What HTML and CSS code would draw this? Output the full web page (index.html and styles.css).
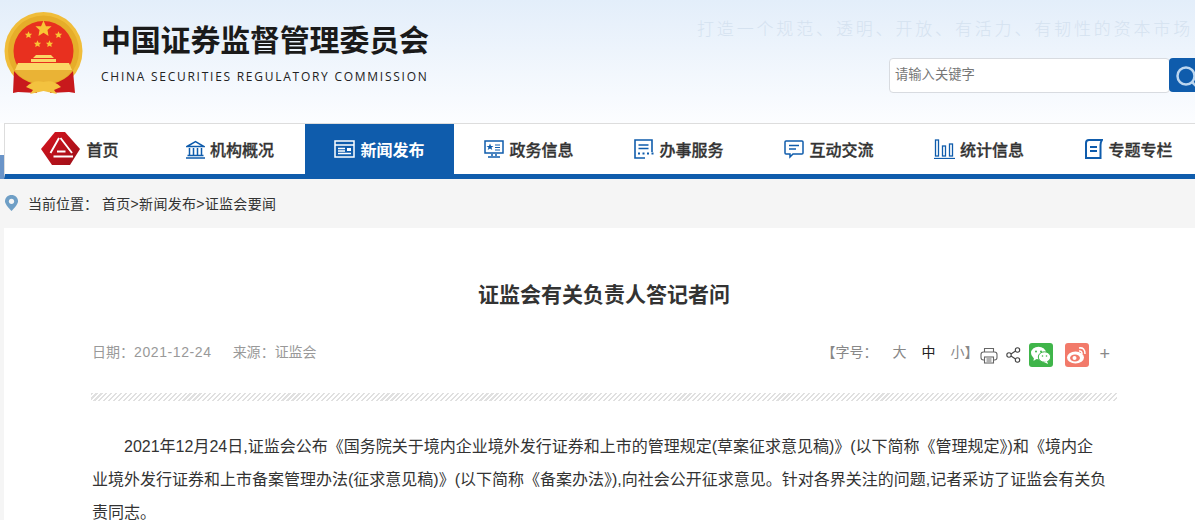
FILE: index.html
```html
<!DOCTYPE html>
<html lang="zh-CN">
<head>
  <meta charset="UTF-8" />
  <title>证监会有关负责人答记者问</title>
  <meta name="viewport" content="width=device-width, initial-scale=1" />
  <link rel="stylesheet" href="styles.css">
</head>
<body>
  <header class="header">
    <div class="brand">
      <svg class="seal" width="80" height="84" viewBox="0 0 80 84">
        <defs>
          <path id="star" d="M0 -10 L2.900 -3.100 L9.500 -3.100 L4.700 1.200 L5.900 8.100 L0 4.500 L-5.900 8.100 L-4.700 1.200 L-9.500 -3.100 L-2.900 -3.100 Z" fill="#f9c535"/>
        </defs>
        <circle cx="39.500" cy="40" r="39" fill="#f0bd3a"/>
        <circle cx="39.500" cy="40" r="35.500" fill="#e6ad2a"/>
        <circle cx="39.500" cy="40" r="30" fill="#e8301f"/>
        <use href="#star" transform="translate(39.500 18) scale(.85)"/>
        <use href="#star" transform="translate(24.500 24) scale(.38)"/>
        <use href="#star" transform="translate(54.500 24) scale(.38)"/>
        <use href="#star" transform="translate(33.500 33) scale(.38)"/>
        <use href="#star" transform="translate(45.500 33) scale(.38)"/>
        <path d="M29 47 L32 44 L47 44 L50 47 Z M27 48 H52 V51 H27 Z" fill="#fbd766"/>
        <path d="M14 52 H65 L68 59 H11 Z" fill="#fbd766"/>
        <path d="M11 59 H68 Q60 72 39.500 72 Q19 72 11 59 Z" fill="#eab335"/>
        <path d="M10 60 Q18 70 31 73 L33 82 L14 81 L9 82 Z" fill="#c8191c"/>
        <path d="M69 60 Q61 70 48 73 L46 82 L65 81 L71 82 Z" fill="#c8191c"/>
        <path d="M22 76 Q30 68 39.500 71 Q49 68 57 76 L50 79 L53 83 L39.500 80 L26 83 L29 79 Z" fill="#f3c23f"/>
      </svg>
      <div class="brand-text">
        <div class="brand-cn">中国证券监督管理委员会</div>
        <div class="brand-en">CHINA SECURITIES REGULATORY COMMISSION</div>
      </div>
    </div>
    <div class="header-right">
      <div class="slogan">打造一个规范、透明、开放、有活力、有韧性的资本市场</div>
      <div class="search">
        <div class="search-input">请输入关键字</div>
        <div class="search-btn">
          <svg width="26" height="34" viewBox="0 0 26 34"><circle cx="17" cy="18" r="8.500" fill="none" stroke="#bcd6ef" stroke-width="2.500"/><path d="M23 24 L27 28" stroke="#bcd6ef" stroke-width="2.500"/></svg>
        </div>
      </div>
    </div>
  </header>

  <div class="nav-wrap">
    <nav class="nav">
      <a class="nav-item">
        <svg class="home-logo" width="39" height="34" viewBox="0 0 39 34">
          <defs>
            <linearGradient id="logoRed" x1="0" y1="0" x2="1" y2="1">
              <stop offset="0" stop-color="#d8141f"/>
              <stop offset="1" stop-color="#9c0f18"/>
            </linearGradient>
          </defs>
          <path d="M14 0 H24 L39 17 L29 33 H11 L0 17 Z" fill="url(#logoRed)"/>
          <path d="M18 6 L9.500 21 M19.500 6 L31 21 M12.500 24.500 H32 M16 19.500 H24.500" fill="none" stroke="#fff" stroke-width="1.900"/>
        </svg>
        首页
      </a>
      <a class="nav-item">
        <svg width="19" height="19" viewBox="0 0 19 19" fill="none" stroke="#0f5cac" stroke-width="1.500">
          <path d="M1 6.500 L9.500 1.500 L18 6.500 Z"/><path d="M3.500 8 V15 M7.500 8 V15 M11.500 8 V15 M15.500 8 V15 M1.500 15.500 H17.500 M0 18 H19"/>
        </svg>
        机构概况
      </a>
      <a class="nav-item active">
        <svg width="21" height="18" viewBox="0 0 21 18" fill="none" stroke="#fff" stroke-width="1.500">
          <rect x="1" y="1" width="19" height="16"/><path d="M1 5 H20 M4 8.500 H11 M4 11 H11 M4 13.500 H17" /><rect x="13" y="8" width="4" height="3" fill="#fff" stroke="none"/>
        </svg>
        新闻发布
      </a>
      <a class="nav-item">
        <svg width="20" height="18" viewBox="0 0 20 18" fill="none" stroke="#0f5cac" stroke-width="1.500">
          <rect x="1" y="1" width="18" height="12"/><path d="M11 5 H16 M11 7.500 H16 M11 10 H16" stroke-width="1"/><path d="M6 3.500 L7 6 L9.500 6 L7.500 7.500 L8.300 10 L6 8.500 L3.700 10 L4.500 7.500 L2.500 6 L5 6 Z" fill="#0f5cac" stroke="none"/><path d="M8 14 V16 M12 14 V16 M4 17 H16"/>
        </svg>
        政务信息
      </a>
      <a class="nav-item">
        <svg width="20" height="20" viewBox="0 0 20 20" fill="none" stroke="#0f5cac" stroke-width="1.600">
          <path d="M18 13 V1 H1 V19 H11"/><path d="M4.500 6 H14.500 M4.500 9.500 H14.500"/><path d="M4 14.500 H6 M8.500 14.500 H10.500 M13 14.500 H15 M17.500 14.500 H19.500" stroke-width="2"/>
        </svg>
        办事服务
      </a>
      <a class="nav-item">
        <svg width="20" height="19" viewBox="0 0 20 19" fill="none" stroke="#0f5cac" stroke-width="1.500">
          <path d="M2 1 H18 Q19 1 19 2 V13 Q19 14 18 14 H9 L6 17 V14 H2 Q1 14 1 13 V2 Q1 1 2 1 Z"/><path d="M5 5.500 H15 M5 9 H12"/>
        </svg>
        互动交流
      </a>
      <a class="nav-item">
        <svg width="21" height="20" viewBox="0 0 21 20" fill="none" stroke="#0f5cac" stroke-width="1.300">
          <rect x="1.500" y="1" width="3" height="16"/><rect x="8.500" y="7" width="3" height="10"/><rect x="15.500" y="5" width="3" height="12"/><path d="M0 19.500 H21"/>
        </svg>
        统计信息
      </a>
      <a class="nav-item">
        <svg width="18" height="20" viewBox="0 0 18 20" fill="none" stroke="#0f5cac" stroke-width="2">
          <path d="M4 1 H17 Q15.500 3 15.500 6 V19 H1 V4 Q1 1 4 1 Z"/><path d="M5 8 H12 M5 12 H12"/>
        </svg>
        专题专栏
      </a>
    </nav>
  </div>

  <div class="crumbs">
    <svg width="13" height="16" viewBox="0 0 13 16"><path d="M6.500 0 C10.200 0 13 2.700 13 6.300 C13 10 6.500 16 6.500 16 C6.500 16 0 10 0 6.300 C0 2.700 2.800 0 6.500 0 Z" fill="#6f9fc6"/><circle cx="6.500" cy="6.300" r="2.600" fill="#f5f5f5"/></svg>
    <span class="crumbs-label">当前位置<span class="colon">：</span></span>
    <span class="crumbs-path">首页&gt;新闻发布&gt;证监会要闻</span>
  </div>

  <main class="article">
    <h1 class="article-title">证监会有关负责人答记者问</h1>
    <div class="meta">
      <div class="meta-left">
        <span>日期<span class="colon">：</span><span class="date">2021-12-24</span></span>
        <span>来源<span class="colon">：</span>证监会</span>
      </div>
      <div class="tools">
        <span class="font-size">【字号<span class="colon">：</span></span>
        <span class="size-btn">大</span>
        <span class="size-btn current">中</span>
        <span class="size-btn">小】</span>
        <svg class="tool-print" width="18" height="17" viewBox="0 0 18 17" fill="none" stroke="#666" stroke-width="1.100">
          <path d="M4.500 5 V1.500 H13.500 V5"/><rect x="1" y="5" width="16" height="8" rx="2.500"/><rect x="4.500" y="10" width="9" height="6" fill="#fff"/><path d="M6.500 12 H11.500 M6.500 14 H11.500"/>
        </svg>
        <svg class="tool-share" width="15" height="16" viewBox="0 0 15 16" fill="none" stroke="#444" stroke-width="1.100">
          <circle cx="11.500" cy="3" r="2.200"/><circle cx="3" cy="8" r="2.200"/><circle cx="11.500" cy="13" r="2.200"/><path d="M5 7 L9.500 4 M5 9 L9.500 12"/>
        </svg>
        <span class="share-box wechat">
          <svg width="20" height="18" viewBox="0 0 20 18"><ellipse cx="7.500" cy="7" rx="7.500" ry="6.300" fill="#fff"/><path d="M3 11 L2.500 15 L7 12 Z" fill="#fff"/><ellipse cx="13.500" cy="11" rx="6.200" ry="5.200" fill="#fff" stroke="#3fb54a"/><path d="M16 15 L17 18 L13 16 Z" fill="#fff"/><circle cx="5" cy="5.500" r="1" fill="#3fb54a"/><circle cx="10" cy="5.500" r="1" fill="#3fb54a"/><circle cx="11.500" cy="10" r=".8" fill="#3fb54a"/><circle cx="15.500" cy="10" r=".8" fill="#3fb54a"/></svg>
        </span>
        <span class="share-box weibo">
          <svg width="20" height="18" viewBox="0 0 20 18"><ellipse cx="8.500" cy="11.500" rx="8.500" ry="6" fill="#fff"/><ellipse cx="8" cy="12" rx="5" ry="3.500" fill="#f27a6a"/><circle cx="7.500" cy="12" r="2" fill="#fff"/><path d="M12 2 Q18 1 18 8" fill="none" stroke="#fff" stroke-width="1.500"/><path d="M12 5 Q15 4.500 15 8" fill="none" stroke="#fff" stroke-width="1.500"/></svg>
        </span>
        <span class="tool-plus">+</span>
      </div>
    </div>
    <div class="hatch"></div>
    <div class="article-body">
      <p>2021年12月24日,证监会公布《国务院关于境内企业境外发行证券和上市的管理规定(草案征求意见稿)》(以下简称《管理规定》)和《境内企业境外发行证券和上市备案管理办法(征求意见稿)》(以下简称《备案办法》),向社会公开征求意见。针对各界关注的问题,记者采访了证监会有关负责同志。</p>
    </div>
  </main>
</body>
</html>
```

FILE: styles.css
```css
* {
  box-sizing: border-box;
}
html, body {
  height: 100%;
  overflow: hidden;
}
body {
  margin: 0;
  font-family: "Liberation Sans", "Noto Sans CJK SC", sans-serif;
  color: #333;
  background-color: #f5f5f5;
}
/* TC glyph has the colon centred, like the original */
.colon {
  font-family: "Noto Sans CJK TC", sans-serif;
}

.header {
  display: flex;
  justify-content: space-between;
  height: 123px;
  background: linear-gradient(#e3eefa, #fcfdff);
}
.brand {
  display: flex;
  padding: 11px 0 0 4px;
}
.seal {
  flex: none;
}
.brand-text {
  margin-left: 17px;
}
.brand-cn {
  margin-top: 10px;
  font-size: 30px;
  line-height: 40px;
  font-weight: bold;
  letter-spacing: -0.2px;
  color: #1a1a1a;
  white-space: nowrap;
}
.brand-en {
  margin-top: 6px;
  font-family: "Open Sans", sans-serif;
  font-size: 12px;
  line-height: 20px;
  letter-spacing: 1.74px;
  color: #222;
  white-space: nowrap;
}
.header-right {
  width: 498px;
  overflow: hidden;
}
.slogan {
  margin-top: 15px;
  height: 26px;
  font-family: "Noto Sans CJK SC", sans-serif;
  font-weight: 300;
  font-size: 17px;
  line-height: 26px;
  letter-spacing: 2.84px;
  color: #d5e2f0;
  white-space: nowrap;
}
.search {
  display: flex;
  margin: 17px 0 0 192px;
  height: 35px;
}
.search-input {
  flex: 0 0 281px;
  padding-left: 5px;
  font-size: 13.3px;
  line-height: 32px;
  color: #777;
  background-color: #fff;
  border: 1px solid #d8dbe0;
  border-radius: 4px;
}
.search-btn {
  flex: none;
  width: 30px;
  height: 34px;
  margin-left: -1px;
  background-color: #0f5cac;
  border-radius: 4px 0 0 4px;
}
.search-btn svg {
  display: block;
}

.nav-wrap {
  height: 56px;
  padding-left: 4px;
  background: linear-gradient(#fff 32px, #6a94c8 32px);
}
.nav {
  display: flex;
  height: 56px;
  background-color: #fff;
  border-top: 1px solid #ddd;
  border-left: 1px solid #ddd;
  border-bottom: 5px solid #0f5cac;
}
.nav-item {
  display: flex;
  flex: 0 0 150px;
  align-items: center;
  justify-content: center;
  gap: 5px;
  font-size: 16px;
  font-weight: 500;
  -webkit-text-stroke: 0.3px #333;
  color: #333;
  white-space: nowrap;
}
.nav-item.active {
  flex-basis: 149px;
  color: #fff;
  font-weight: bold;
  -webkit-text-stroke: 0;
  background-color: #0f5cac;
}
.home-logo {
  margin-right: 1px;
}

.crumbs {
  display: flex;
  align-items: center;
  height: 47px;
  padding-left: 5px;
  font-size: 14px;
  color: #333;
}
.crumbs-label {
  margin: 0 4px 0 10px;
}
.crumbs-path {
  letter-spacing: 0.3px;
}

.article {
  margin: 2px 0 0 4px;
  padding: 0 78px 0 87px;
  height: 292px;
  background-color: #fff;
}
.article-title {
  margin: 0;
  padding-top: 52px;
  font-size: 21px;
  line-height: 30px;
  font-weight: bold;
  text-align: center;
  color: #333;
}
.meta {
  display: flex;
  justify-content: space-between;
  align-items: center;
  margin-top: 29px;
  height: 24px;
  font-size: 14px;
  color: #999;
}
.meta-left {
  display: flex;
  gap: 21px;
  padding-left: 1px;
}
.date {
  letter-spacing: 0.6px;
}
.tools {
  display: flex;
  align-items: center;
  height: 24px;
  padding-right: 7px;
  color: #888;
  font-size: 14px;
}
.size-btn {
  margin-left: 15px;
}
.size-btn.current {
  color: #222;
}
.tool-print {
  margin: 8px 0 0 2px;
}
.tool-share {
  margin: 8px 0 0 8px;
}
.share-box {
  display: flex;
  flex: none;
  align-items: center;
  justify-content: center;
  width: 24px;
  height: 24px;
  margin-top: 8px;
  border-radius: 3px;
}
.wechat {
  margin-left: 8px;
  background-color: #3fb54a;
}
.weibo {
  margin-left: 12px;
  background-color: #f27a6a;
}
.tool-plus {
  margin: 6px 0 0 10px;
  font-size: 18px;
  color: #888;
}
.hatch {
  height: 8px;
  margin-top: 30px;
  background: repeating-linear-gradient(135deg, #e0e0e0 0, #e0e0e0 1.5px, #fff 1.5px, #fff 3.5px);
}
.article-body {
  margin-top: 29px;
  padding: 0 10px 0 1px;
  font-size: 16px;
  line-height: 33px;
  color: #333;
}
.article-body p {
  margin: 0;
  text-indent: 2em;
}
```
